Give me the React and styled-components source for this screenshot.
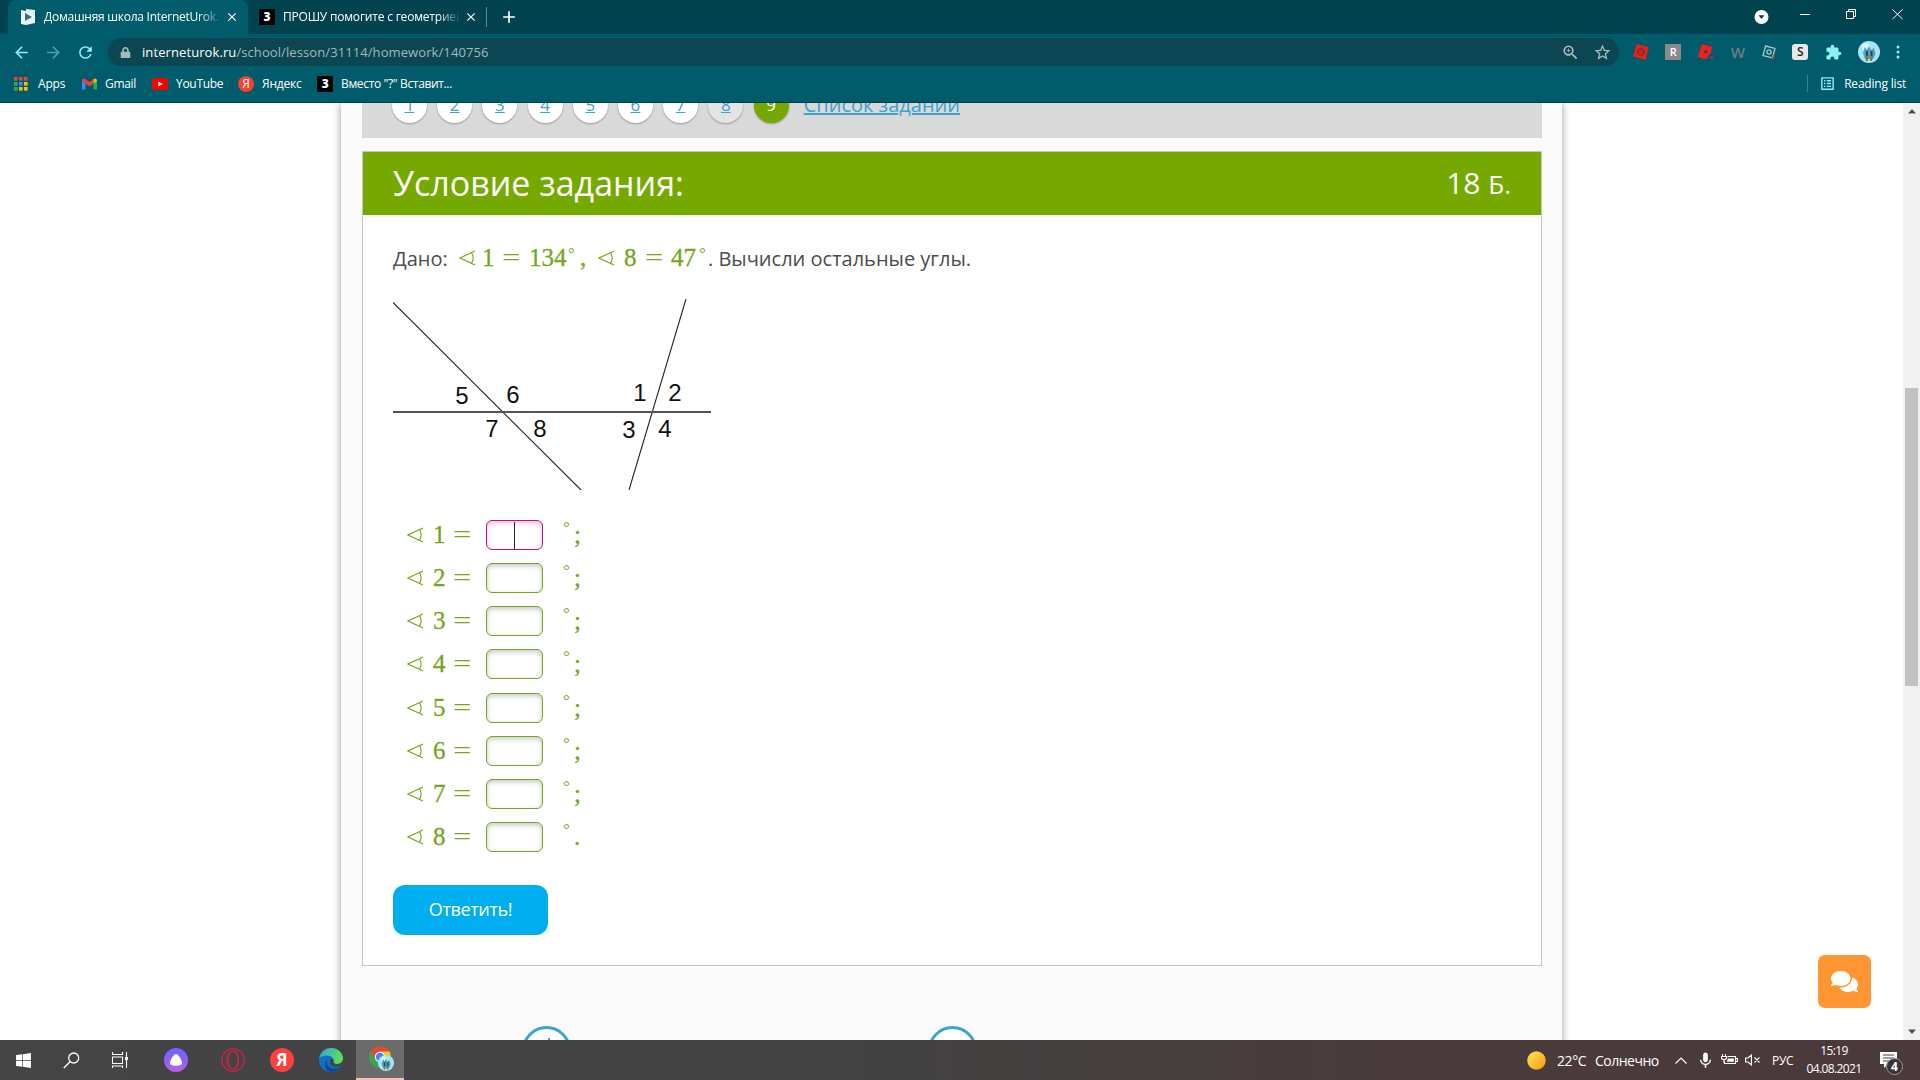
import React from "react";

import styled, { createGlobalStyle, css } from 'styled-components';

import { FaComments, FaWindows, FaLock } from 'react-icons/fa';
import { MdArrowBack, MdArrowForward, MdRefresh, MdClose, MdAdd, MdStarBorder, MdZoomIn, MdMic, MdOutlineListAlt, MdExtension } from 'react-icons/md';

const GlobalStyle = createGlobalStyle`
    * { box-sizing: border-box; }
    body {
        margin: 0;
        overflow: hidden;
        font-family: 'Open Sans', 'Noto Sans', sans-serif;
    }
    svg { display: block; flex-shrink: 0; }
`;

const Screen = styled.div`
    display: flex;
    flex-direction: column;
    width: 1920px;
    height: 1080px;
    background: #fff;
`;

/* ---------- browser ---------- */

const TabStrip = styled.div`
    display: flex;
    height: 34px;
    padding-left: 8px;
    background: #00434f;
    color: #fff;
`;

const Tab = styled.div`
    display: flex;
    align-items: center;
    width: ${(p) => p.$width}px;
    padding-left: ${(p) => p.$pad}px;
    border-radius: 8px 8px 0 0;
    background: ${(p) => (p.$active ? '#005b6b' : 'transparent')};
`;

const TabTitle = styled.span`
    width: 176px;
    margin: 0 5px 0 8px;
    overflow: hidden;
    white-space: nowrap;
    font-size: 12px;
    line-height: 18px;
    letter-spacing: ${(p) => p.$spacing}px;
    mask-image: linear-gradient(90deg, #000 155px, transparent 178px);
`;

const Favicon = styled.span`
    width: 16px;
    height: 16px;
    flex-shrink: 0;
    border-radius: ${(p) => (p.$round ? 8 : 1)}px;
    background: ${(p) => p.$bg || '#000'};
    color: #fff;
    font-size: 12px;
    font-weight: ${(p) => (p.$round ? 400 : 800)};
    line-height: 16px;
    text-align: center;
`;

const NewTab = styled.div`
    display: flex;
    align-items: center;
    gap: 12px;
    height: 34px;
    &::before {
        content: '';
        width: 1px;
        height: 20px;
        background: #5f8d95;
    }
`;

const WindowButtons = styled.div`
    display: flex;
    align-items: center;
    margin-left: auto;
    padding-right: 2px;
    height: 32px;
`;

const Toolbar = styled.div`
    display: flex;
    align-items: center;
    height: 36px;
    padding: 0 20px 0 12px;
    background: #005b6b;
    color: #8ff0f4;
`;

const NavButtons = styled.div`
    display: flex;
    gap: 13px;
    width: 96px;
`;

const AddressBar = styled.div`
    display: flex;
    align-items: center;
    width: 1511px;
    height: 28px;
    padding: 0 7px 0 12px;
    border-radius: 14px;
    background: #0b4652;
    color: #a5b8bc;
    font-size: 13px;
    letter-spacing: 0.09px;
    span { margin-left: 11px; white-space: nowrap; }
    b { color: #fff; font-weight: 400; }
`;

const AddressTools = styled.div`
    display: flex;
    gap: 13px;
    margin-left: auto;
    color: #a9bcc0;
`;

const Extensions = styled.div`
    display: flex;
    align-items: center;
    justify-content: space-between;
    width: 267px;
    margin-left: auto;
`;

const ExtBadge = styled.span`
    width: 16px;
    height: 16px;
    border-radius: ${(p) => p.$radius}px;
    background: ${(p) => p.$bg};
    color: ${(p) => p.$color};
    font-size: ${(p) => p.$size}px;
    font-weight: ${(p) => p.$weight || 400};
    line-height: 16px;
    text-align: center;
`;

const Bookmarks = styled.div`
    display: flex;
    align-items: center;
    height: 33px;
    padding: 0 14px 5px 14px;
    background: #005b6b;
    border-bottom: 1px solid #00404c;
    color: #fff;
    font-size: 12px;
`;

const Bookmark = styled.div`
    display: flex;
    align-items: center;
    gap: ${(p) => p.$gap || 8}px;
    width: ${(p) => p.$width}px;
    white-space: nowrap;
    letter-spacing: ${(p) => p.$spacing || 0}px;
`;

const ReadingList = styled.div`
    display: flex;
    align-items: center;
    gap: 8px;
    margin-left: auto;
    padding-left: 11px;
    height: 17px;
    border-left: 1px solid #2f8591;
    white-space: nowrap;
    letter-spacing: -0.2px;
    svg { color: #8ff0f4; }
`;

/* ---------- page ---------- */

const Viewport = styled.div`
    display: flex;
    height: 937px;
    overflow: hidden;
`;

const PageArea = styled.div`
    position: relative;
    flex: 1;
    padding-left: 341px;
    overflow: hidden;
`;

const Content = styled.div`
    width: 1221px;
    height: 960px;
    padding: 0 20px 0 21px;
    background: #fafafa;
    box-shadow: 0 0 8px rgba(40, 50, 70, 0.5);
`;

const TaskNav = styled.div`
    display: flex;
    align-items: flex-end;
    height: 35px;
    padding: 0 0 15px 30px;
    background: #d9d9d9;
`;

const TaskLink = styled.a`
    width: 35px;
    height: 35px;
    flex-shrink: 0;
    margin-right: 10.2px;
    border-radius: 50%;
    background: #fff;
    box-shadow: 0 1px 2px rgba(0, 0, 0, 0.3);
    color: #3ba3cf;
    font-size: 17px;
    line-height: 34px;
    text-align: center;
    text-decoration: underline;
    ${(p) => p.$muted && css`
        background: #e4e4e4;
    `}
    ${(p) => p.$current && css`
        background: #76a900;
        color: #fff;
        text-decoration: none;
    `}
`;

const ListLink = styled.a`
    height: 35px;
    margin-left: 5px;
    color: #3ba3cf;
    font-size: 20px;
    line-height: 33px;
    white-space: nowrap;
    text-decoration: underline;
`;

const Panel = styled.section`
    height: 815px;
    margin-top: 13px;
    border: 1px solid #c6c6c6;
    background: #fff;
`;

const PanelHeader = styled.header`
    display: flex;
    align-items: center;
    justify-content: space-between;
    height: 63px;
    padding: 0 30px 2px;
    background: #76a900;
    color: #fff;
    font-size: 34px;
`;

const Points = styled.span`
    font-size: 30px;
    small { font-size: 26px; }
`;

const PanelBody = styled.div`
    padding: 25px 30px 0;
`;

const Given = styled.div`
    display: flex;
    align-items: baseline;
    height: 36px;
    color: #4c4c4c;
    font-size: 20px;
    line-height: 36px;
    white-space: nowrap;
`;

const Label = styled.span`
    width: ${(p) => p.$width}px;
    flex-shrink: 0;
`;

const MathText = styled.span`
    display: inline-block;
    width: ${(p) => p.$width}px;
    flex-shrink: 0;
    color: #76a51e;
    font-family: 'Liberation Serif', serif;
    font-size: 25px;
    -webkit-text-stroke: 0.3px #76a51e;
`;

const Equals = styled(MathText)`
    transform: scaleX(1.3);
    transform-origin: 0 50%;
    -webkit-text-stroke: 0;
`;

const Degree = styled(MathText)`
    font-size: 17px;
    transform: translateY(-7px);
    -webkit-text-stroke: 0;
`;

const Figure = styled.svg`
    margin-top: 23px;
`;

const Answers = styled.div`
    margin-top: 23px;
    padding-left: 14px;
`;

const AnswerRow = styled.div`
    display: flex;
    align-items: center;
    height: 43.25px;
    line-height: 30px;
`;

const AnswerBox = styled.div`
    display: flex;
    justify-content: center;
    width: 57px;
    height: 30px;
    margin-right: 20px;
    border: 1px solid ${(p) => (p.$focused ? '#b3177e' : '#76a51e')};
    border-radius: 6px;
    background: #fff;
    box-shadow: inset 0 2px 5px ${(p) => (p.$focused ? 'rgba(200, 30, 130, 0.3)' : 'rgba(60, 70, 80, 0.3)')};
    &::after {
        content: '';
        display: ${(p) => (p.$focused ? 'block' : 'none')};
        width: 1px;
        margin-top: 1px;
        background: #222;
    }
`;

const SubmitButton = styled.button`
    display: block;
    width: 155px;
    height: 50px;
    margin-top: 26px;
    padding: 0 0 2px;
    border: 0;
    border-radius: 12px;
    background: #00aeef;
    color: #fff;
    font: 18px 'Open Sans', sans-serif;
    letter-spacing: -0.35px;
`;

const Steps = styled.div`
    display: flex;
    gap: 357px;
    margin-top: 60px;
    padding-left: 160px;
`;

const StepCircle = styled.div`
    display: flex;
    justify-content: center;
    width: 49px;
    height: 49px;
    padding-top: 9px;
    border: 3px solid #3ba3cf;
    border-radius: 50%;
    background: #fff;
`;

const ChatButton = styled.button`
    position: absolute;
    right: 32px;
    bottom: 32px;
    display: flex;
    align-items: center;
    justify-content: center;
    width: 53px;
    height: 53px;
    border: 0;
    border-radius: 7px;
    background: #ff9633;
    color: #fff;
`;

const Scrollbar = styled.div`
    display: flex;
    flex-direction: column;
    align-items: center;
    width: 17px;
    padding: 6px 0 6px;
    background: #f1f1f1;
`;

const ScrollThumb = styled.div`
    width: 13px;
    height: 298px;
    margin: 274px 0 auto;
    background: #c1c1c1;
`;

/* ---------- taskbar ---------- */

const Taskbar = styled.div`
    display: flex;
    height: 40px;
    background: linear-gradient(90deg, #444 0%, #424242 45%, #4a3b3c 75%, #4b393b 100%);
    color: #fff;
`;

const TaskItem = styled.div`
    display: flex;
    align-items: center;
    justify-content: center;
    width: ${(p) => p.$width || 49}px;
    height: 40px;
    ${(p) => p.$active && css`
        padding-left: 4px;
        background: #6b6b6b;
        border-bottom: 2px solid #f5c0b6;
    `}
`;

const AppDot = styled.span`
    width: 24px;
    height: 24px;
    border-radius: 50%;
    background: ${(p) => p.$bg};
    font-size: 17px;
    font-weight: 700;
    line-height: 23px;
    text-align: center;
`;

const Tray = styled.div`
    display: flex;
    align-items: center;
    width: 393px;
    margin-left: auto;
    font-size: 14px;
    white-space: nowrap;
`;

const TrayItem = styled.div`
    width: ${(p) => p.$width}px;
    flex-shrink: 0;
    font-size: ${(p) => p.$size || 14}px;
    letter-spacing: ${(p) => p.$spacing || 0}px;
`;

const Clock = styled(TrayItem)`
    font-size: 12px;
    line-height: 18px;
    text-align: center;
    letter-spacing: -0.6px;
`;

const Notice = styled.div`
    position: relative;
    width: 36px;
    height: 16px;
    margin-left: 18px;
    span {
        position: absolute;
        left: 6px;
        top: 6px;
        width: 17px;
        height: 17px;
        border: 1px solid #999;
        border-radius: 50%;
        background: #3a3335;
        font-size: 12px;
        font-weight: 700;
        line-height: 15px;
        text-align: center;
    }
`;

const Angle = ({ gap }) => (
    <svg width={16 + gap} height="16" viewBox={`0 0 ${16 + gap} 16`} fill="none" stroke="#76a51e" strokeWidth="1.1">
        <path d="M16 1 L1 8 L16 15 M12.5 2.8 Q15.8 8 12.5 13.2" />
    </svg>
);

const SchoolIcon = () => (
    <svg width="16" height="16" viewBox="0 0 16 16">
        <path d="M1 1 L6 2 L6 0 L15 1 V14 L6 16 L1 15Z" fill="#e8f6ff" />
        <path d="M5 4 L12 8 L5 12Z" fill="#3d6a86" />
    </svg>
);

const AppsIcon = () => (
    <svg width="14" height="14" viewBox="0 0 14 14">
        {['#ea4335', '#ea4335', '#ea4335', '#34a853', '#4285f4', '#fbbc04', '#34a853', '#fbbc04', '#fbbc04'].map((c, i) => (
            <rect key={i} x={(i % 3) * 5} y={Math.floor(i / 3) * 5} width="3.6" height="3.6" fill={c} />
        ))}
    </svg>
);

const GmailIcon = () => (
    <svg width="15" height="12" viewBox="0 0 15 12">
        <path d="M0 2 V11.5 H3.5 V5Z" fill="#4285f4" />
        <path d="M15 2 V11.5 H11.5 V5Z" fill="#34a853" />
        <path d="M0 2 Q1 -0.6 3.4 1 L7.5 4.2 L11.6 1 V5.2 L7.5 8.4 L0 3Z" fill="#ea4335" />
        <path d="M11.5 1 Q14 -0.6 15 2 V3 L11.5 5.4Z" fill="#fbbc04" />
    </svg>
);

const YoutubeIcon = () => (
    <svg width="16" height="12" viewBox="0 0 16 12">
        <rect width="16" height="12" rx="3.5" fill="#f00" />
        <path d="M6.4 3.4 L10.8 6 L6.4 8.6Z" fill="#fff" />
    </svg>
);

const RobloxIcon = ({ pencil }) => (
    <svg width="16" height="16" viewBox="0 0 16 16">
        {pencil ? (
            <>
                <path d="M3.6 0 L14.5 2.8 L12.8 8.6 L8 15.6 L0 13Z" fill="#f0201c" />
                <path d="M6.2 6.8 L9.4 6 L9 9 L6.4 9.4Z" fill="#0c4f5c" />
                <path d="M10 14.5 L15.5 10.4 L14.5 14Z" fill="#d3221f" />
            </>
        ) : (
            <>
                <path d="M3.6 0 L16 3.3 L12.4 16 L0 12.6Z" fill="#e2231a" />
                <circle cx="8" cy="8" r="3" fill="none" stroke="#7d2a31" strokeWidth="2.2" strokeDasharray="1.6 0.8" />
            </>
        )}
    </svg>
);

const TiltedSquare = () => (
    <svg width="14" height="14" viewBox="0 0 14 14" fill="none" stroke="#a8c6cd" strokeWidth="1.3">
        <path d="M3.6 1 L13 3.4 L10.4 13 L1 10.6Z" />
        <circle cx="7" cy="7" r="2.1" />
        <path d="M9.6 13 L12 12.6 V9.8" stroke="#c2332f" />
    </svg>
);

const Avatar = ({ size }) => (
    <svg width={size} height={size} viewBox="0 0 22 22">
        <circle cx="11" cy="11" r="11" fill="#a8e4f3" />
        <circle cx="8" cy="6" r="4" fill="#d5f5fb" />
        <path d="M5 12 L7 6 L9 9 L11 5 L13 9 L16 7 L17.5 13 L15 18 L7 18Z" fill="#4f9fc0" />
        <path d="M8 10 H10 V15 H8Z M12.5 10 H14.5 V15 H12.5Z" fill="#27495d" />
        <path d="M7.5 15 H10 V20 H8Z M12 15 H15 L14 20 H12Z" fill="#7b7a4c" />
    </svg>
);

const Triangle = ({ up }) => (
    <svg width="8" height="5" viewBox="0 0 8 5">
        <path d={up ? 'M0 4.5 L4 0 L8 4.5Z' : 'M0 0.5 L4 5 L8 0.5Z'} fill="#505050" />
    </svg>
);

const WindowIcons = () => (
    <svg width="164" height="24" viewBox="0 0 164 24" fill="none" stroke="#fff" strokeWidth="1">
        <circle cx="7.5" cy="13" r="7" fill="#fff" stroke="none" />
        <path d="M4.5 11.3 H10.5 L7.5 15Z" fill="#00434f" stroke="none" />
        <path d="M46 10.5 H56" />
        <path d="M92.5 7.5 H99.5 V14.5 H92.5Z M94.5 7.5 V5.5 H101.5 V12.5 H99.5" />
        <path d="M138.5 5.5 L148.5 15 M148.5 5.5 L138.5 15" />
    </svg>
);

// section drawing: two lines crossing one horizontal line
const marks = [
    ['5', 69, 105], ['6', 120, 104], ['1', 247, 102], ['2', 282, 102],
    ['7', 99, 138], ['8', 147, 138], ['3', 236, 139], ['4', 272, 138],
];

const Drawing = () => (
    <Figure width="320" height="191" viewBox="0 0 320 191">
        <g stroke="#222" strokeWidth="1.1">
            <path d="M0 3.5 L188 191" />
            <path d="M293 0 L236 191" />
            <path d="M0 113 H318" stroke="#555" strokeWidth="2" />
        </g>
        {marks.map(([n, x, y]) => (
            <text key={n} x={x} y={y} textAnchor="middle" fontFamily="Liberation Sans, sans-serif" fontSize="24" fill="#111">{n}</text>
        ))}
    </Figure>
);

const WindowsSearch = () => (
    <svg width="17" height="17" viewBox="0 0 17 17" fill="none" stroke="#fff" strokeWidth="1.3">
        <circle cx="10.7" cy="6" r="5" />
        <path d="M7 9.8 L0.8 16" />
    </svg>
);

const TaskView = () => (
    <svg width="17" height="16" viewBox="0 0 17 16" fill="none" stroke="#fff" strokeWidth="1.1">
        <path d="M0.5 0 V2.5 H10.5 V0 M0.5 5 H10.5 V11.5 H0.5Z M0.5 16 V14 H10.5 V16 M14.5 0 V16" />
        <rect x="13" y="5" width="3" height="3" fill="#fff" stroke="none" />
    </svg>
);

const AliceIcon = () => (
    <svg width="24" height="24" viewBox="0 0 24 24">
        <defs>
            <linearGradient id="alice" x1="0" y1="0" x2="0" y2="1">
                <stop offset="0" stopColor="#6c63ff" />
                <stop offset="1" stopColor="#b35cf0" />
            </linearGradient>
        </defs>
        <circle cx="12" cy="12" r="12" fill="url(#alice)" />
        <path d="M12 6 C14.5 6 18.3 13 18 15.5 C17.6 18.6 6.4 18.6 6 15.5 C5.7 13 9.5 6 12 6Z" fill="#fff" />
    </svg>
);

const OperaIcon = () => (
    <svg width="24" height="24" viewBox="0 0 24 24" fill="none" stroke="#c62647" strokeWidth="1.3">
        <circle cx="12" cy="12" r="11.2" />
        <ellipse cx="12" cy="12" rx="5" ry="8.8" />
        <path d="M9 2.5 Q1.5 12 9 21.5 M15 2.8 Q20.5 12 15 21.2" strokeWidth="0.9" />
    </svg>
);

const EdgeIcon = () => (
    <svg width="24" height="24" viewBox="0 0 24 24">
        <defs>
            <linearGradient id="edgeTop" x1="0" y1="0" x2="1" y2="0.3">
                <stop offset="0" stopColor="#2aa7e0" />
                <stop offset="1" stopColor="#5fdc5a" />
            </linearGradient>
        </defs>
        <circle cx="12" cy="12" r="12" fill="#1470c4" />
        <path d="M0.3 10 C2 3 7 0 12 0 C19 0 24 5 24 10.5 C24 14 21 16 18 16 C15 16 13.8 15 14.6 13.6 C16 10 11 6.6 6.5 7.6 C3.6 8 1.4 9 0.3 10Z" fill="url(#edgeTop)" />
        <path d="M9 10 C6 14 8.5 20.5 15.5 20.6 C18.5 20.6 20.5 19.8 22 18.5 C19.5 22.5 15.5 24 12 24 C6.5 23.5 3.5 17 9 10Z" fill="#12489a" />
        <path d="M14.6 13.6 C13.8 15 15 16 18 16 C20.5 16 23.2 14.8 24 12 V17 C20 20 13 19.5 11.3 16 C10 13 12 10 14.2 11.5Z" fill="#444" />
    </svg>
);

const ChromeIcon = () => (
    <svg width="26" height="26" viewBox="0 0 26 26">
        <circle cx="11" cy="11" r="11" fill="#34a853" />
        <path d="M1.5 5.5 A11 11 0 0 1 20.5 5.5 L11 6 L6.3 13.5Z" fill="#dd4b3e" />
        <path d="M20.5 5.5 A11 11 0 0 1 11 22 L15.8 13.5 L11 5.5Z" fill="#fbc116" />
        <circle cx="11" cy="11" r="5.2" fill="#fff" />
        <circle cx="11" cy="11" r="4.2" fill="#4285f4" />
        <svg x="9" y="9" width="16" height="16" viewBox="0 0 22 22"><Avatar size={22} /></svg>
    </svg>
);

const BatteryIcon = () => (
    <svg width="17" height="12" viewBox="0 0 17 12" fill="none" stroke="#fff" strokeWidth="1.1">
        <path d="M6.5 2.5 H14.5 V9.5 H3.5 V7 M14.5 4.5 H16.4 V7.5 H14.5" />
        <path d="M7 4.5 H12.8 V7.8 H5.8Z" fill="#fff" stroke="none" />
        <path d="M1.5 0 V2.5 M4.5 0 V2.5 M0.5 2.5 H5.5 V4.5 Q3 7 0.5 4.5Z M3 6 V9" />
    </svg>
);

const MuteIcon = () => (
    <svg width="16" height="12" viewBox="0 0 16 12" fill="none" stroke="#fff" strokeWidth="1.1">
        <path d="M0.6 4 H3 L6.4 1 V11 L3 8 H0.6Z M9.5 3.5 L14.5 8.5 M14.5 3.5 L9.5 8.5" />
    </svg>
);

const Browser = () => (
    <>
        <TabStrip>
            <Tab $active $width={240} $pad={12}>
                <SchoolIcon />
                <TabTitle $spacing={-0.25}>Домашняя школа InternetUrok.ru</TabTitle>
                <MdClose size={14} />
            </Tab>
            <Tab $width={238} $pad={11}>
                <Favicon>3</Favicon>
                <TabTitle $spacing={-0.2}>ПРОШУ помогите с геометрией</TabTitle>
                <MdClose size={14} />
            </Tab>
            <NewTab><MdAdd size={20} /></NewTab>
            <WindowButtons><WindowIcons /></WindowButtons>
        </TabStrip>
        <Toolbar>
            <NavButtons>
                <MdArrowBack size={19} />
                <MdArrowForward size={19} opacity={0.5} />
                <MdRefresh size={19} />
            </NavButtons>
            <AddressBar>
                <FaLock size={11} />
                <span><b>interneturok.ru</b>/school/lesson/31114/homework/140756</span>
                <AddressTools>
                    <MdZoomIn size={19} />
                    <MdStarBorder size={19} />
                </AddressTools>
            </AddressBar>
            <Extensions>
                <RobloxIcon />
                <ExtBadge $bg="#8a8a8a" $color="#fff" $radius={1} $size={11} $weight={600}>R</ExtBadge>
                <RobloxIcon pencil />
                <ExtBadge $bg="transparent" $color="#6f7f84" $radius={0} $size={15} $weight={600}>W</ExtBadge>
                <TiltedSquare />
                <ExtBadge $bg="#e8e8e8" $color="#222" $radius={3} $size={12} $weight={600}>S</ExtBadge>
                <MdExtension size={17} />
                <Avatar size={22} />
                <svg width="4" height="14" viewBox="0 0 4 14" fill="#8ff0f4">
                    <circle cx="2" cy="2" r="1.5" /><circle cx="2" cy="7" r="1.5" /><circle cx="2" cy="12" r="1.5" />
                </svg>
            </Extensions>
        </Toolbar>
        <Bookmarks>
            <Bookmark $width={68} $gap={10} $spacing={-0.2}><AppsIcon />Apps</Bookmark>
            <Bookmark $width={70} $spacing={-0.3}><GmailIcon />Gmail</Bookmark>
            <Bookmark $width={86} $spacing={-0.3}><YoutubeIcon />YouTube</Bookmark>
            <Bookmark $width={79} $spacing={-0.2}><Favicon $round $bg="#f0452c">Я</Favicon>Яндекс</Bookmark>
            <Bookmark $width={140} $spacing={-0.35}><Favicon>3</Favicon>Вместо "?" Вставит...</Bookmark>
            <ReadingList><MdOutlineListAlt size={17} />Reading list</ReadingList>
        </Bookmarks>
    </>
);

const Homework = () => (
    <Content>
        <TaskNav>
            {[1, 2, 3, 4, 5, 6, 7, 8, 9].map((n) => (
                <TaskLink key={n} $muted={n === 8} $current={n === 9}>{n}</TaskLink>
            ))}
            <ListLink>Список заданий</ListLink>
        </TaskNav>
        <Panel>
            <PanelHeader>
                <span>Условие задания:</span>
                <Points>18 <small>Б.</small></Points>
            </PanelHeader>
            <PanelBody>
                <Given>
                    <Label $width={66}>Дано:</Label>
                    <Angle gap={7} />
                    <MathText $width={20}>1</MathText>
                    <Equals $width={27}>=</Equals>
                    <MathText $width={39}>134</MathText>
                    <Degree $width={12}>°</Degree>
                    <MathText $width={18}>,</MathText>
                    <Angle gap={10} />
                    <MathText $width={21}>8</MathText>
                    <Equals $width={26}>=</Equals>
                    <MathText $width={28}>47</MathText>
                    <Degree $width={9}>°</Degree>
                    <span>. Вычисли остальные углы.</span>
                </Given>
                <Drawing />
                <Answers>
                    {[1, 2, 3, 4, 5, 6, 7, 8].map((n) => (
                        <AnswerRow key={n}>
                            <Angle gap={10} />
                            <MathText $width={20}>{n}</MathText>
                            <Equals $width={33}>=</Equals>
                            <AnswerBox $focused={n === 1} />
                            <Degree $width={11}>°</Degree>
                            <MathText $width={10}>{n === 8 ? '.' : ';'}</MathText>
                        </AnswerRow>
                    ))}
                </Answers>
                <SubmitButton>Ответить!</SubmitButton>
            </PanelBody>
        </Panel>
        <Steps>
            <StepCircle>
                <svg width="6" height="10" viewBox="0 0 6 10" stroke="#3ba3cf" strokeWidth="2"><path d="M5 0 V10" /></svg>
            </StepCircle>
            <StepCircle />
        </Steps>
    </Content>
);

const SystemBar = () => (
    <Taskbar>
        <TaskItem $width={47}><FaWindows size={17} /></TaskItem>
        <TaskItem $width={49}><WindowsSearch /></TaskItem>
        <TaskItem $width={48}><TaskView /></TaskItem>
        <TaskItem $width={64}><AliceIcon /></TaskItem>
        <TaskItem $width={50}><OperaIcon /></TaskItem>
        <TaskItem $width={48}><AppDot $bg="#fc3f3f">Я</AppDot></TaskItem>
        <TaskItem $width={50}><EdgeIcon /></TaskItem>
        <TaskItem $width={48} $active><ChromeIcon /></TaskItem>
        <Tray>
            <TrayItem $width={30}>
                <svg width="19" height="19" viewBox="0 0 19 19">
                    <defs>
                        <linearGradient id="sun" x1="0" y1="0" x2="1" y2="1">
                            <stop offset="0" stopColor="#ffe45c" />
                            <stop offset="1" stopColor="#f79a0c" />
                        </linearGradient>
                    </defs>
                    <circle cx="9.5" cy="9.5" r="9.3" fill="url(#sun)" />
                </svg>
            </TrayItem>
            <TrayItem $width={38} $spacing={-0.4}>22°C</TrayItem>
            <TrayItem $width={80} $spacing={-0.5}>Солнечно</TrayItem>
            <TrayItem $width={21}>
                <svg width="12" height="7" viewBox="0 0 12 7" fill="none" stroke="#fff" strokeWidth="1.2"><path d="M0.5 6.5 L6 1 L11.5 6.5" /></svg>
            </TrayItem>
            <TrayItem $width={25}><MdMic size={19} /></TrayItem>
            <TrayItem $width={24}><BatteryIcon /></TrayItem>
            <TrayItem $width={27}><MuteIcon /></TrayItem>
            <TrayItem $width={34} $size={12} $spacing={-0.3}>РУС</TrayItem>
            <Clock $width={56}>15:19<br />04.08.2021</Clock>
            <Notice>
                <svg width="17" height="16" viewBox="0 0 17 16">
                    <path d="M0 0 H17 V12 H8 L4 16 V12 H0Z" fill="#fff" />
                    <path d="M3 3 H14 M3 6 H14 M3 9 H10" stroke="#4b393b" />
                </svg>
                <span>4</span>
            </Notice>
        </Tray>
    </Taskbar>
);

const App = () => {
    return (
        <Screen>
            <GlobalStyle />
            <Browser />
            <Viewport>
                <PageArea>
                    <Homework />
                    <ChatButton><FaComments size={27} /></ChatButton>
                </PageArea>
                <Scrollbar>
                    <Triangle up />
                    <ScrollThumb />
                    <Triangle />
                </Scrollbar>
            </Viewport>
            <SystemBar />
        </Screen>
    );
};

export default App;
